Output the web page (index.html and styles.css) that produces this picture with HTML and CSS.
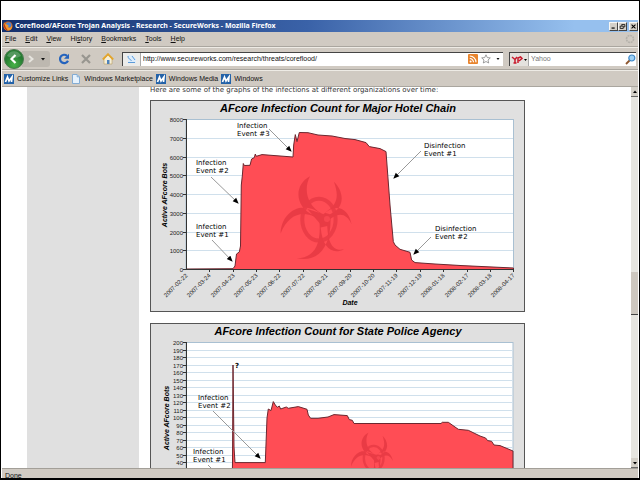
FILE: index.html
```html
<!DOCTYPE html>
<html lang="en">
<head>
<meta charset="utf-8">
<title>Coreflood/AFcore Trojan Analysis - Research - SecureWorks</title>
<link rel="stylesheet" href="styles.css">
</head>
<body>
<div class="window">
  <header class="titlebar">
    <svg class="fox" viewBox="0 0 10 10" aria-hidden="true"><circle cx="5" cy="5" r="4.6" fill="#d9661c"/><circle cx="5.6" cy="4" r="2.8" fill="#4b83cf"/><path d="M1 1 2 3 4 3.4 6 5 4.5 6 7 7 9 4.5C9.500 8 7 9.800 4.500 9.500 1 9 0 5 1 1Z" fill="#f2992c"/><path d="M1 2C0 6 2 9 5 9.500L3 7Z" fill="#b73517"/></svg>
    <h1>Coreflood/AFcore Trojan Analysis - Research - SecureWorks - Mozilla Firefox</h1>
    <div class="controls">
      <button aria-label="Minimize"><svg viewBox="0 0 9 8"><path d="M2 6h4" stroke="#000" stroke-width="1.500"/></svg></button>
      <button aria-label="Restore"><svg viewBox="0 0 9 8"><path d="M3.500 3V1.500h4v3H6M1.500 3.500h4v3h-4z" fill="none" stroke="#000"/></svg></button>
      <button class="close" aria-label="Close"><svg viewBox="0 0 9 8"><path d="M2 1.500 7 6.500M7 1.500 2 6.500" stroke="#000" stroke-width="1.300"/></svg></button>
    </div>
  </header>

  <nav class="menubar">
    <button><u>F</u>ile</button><button><u>E</u>dit</button><button><u>V</u>iew</button><button>Hi<u>s</u>tory</button><button><u>B</u>ookmarks</button><button><u>T</u>ools</button><button><u>H</u>elp</button>
    <svg class="throbber" viewBox="0 0 10 10" aria-hidden="true"><circle cx="5" cy="5" r="3.500" fill="none" stroke="#b5b2ab" stroke-width="1.600" stroke-dasharray="2 .7"/></svg>
  </nav>

  <div class="toolbar">
    <div class="history">
      <button class="back" aria-label="Back"><svg viewBox="0 0 20 20"><defs><radialGradient id="green" cy=".8"><stop offset="0" stop-color="#48b348"/><stop offset="1" stop-color="#267c32"/></radialGradient></defs><circle cx="10" cy="10" r="9.500" fill="url(#green)" stroke="#4b7a50"/><path d="M3 7a7.500 7.500 0 0 1 14 0q-7 4-14 0" fill="#fff" opacity=".22"/><path d="M11.500 6 7.500 10l4 4" fill="none" stroke="#fff" stroke-width="2.200"/></svg></button>
      <button class="forward" aria-label="Forward"><svg viewBox="0 0 26 16"><path d="m7 5 3.500 3L7 11" fill="none" stroke="#e7e5df" stroke-width="2"/><path d="M19 7h4l-2 2.500z" fill="#111"/></svg></button>
    </div>
    <button class="tool" aria-label="Reload"><svg viewBox="0 0 12 12"><path d="M9 2.800A4.200 4.200 0 1 0 10 7.800" fill="none" stroke="#2463bd" stroke-width="2.200"/><path d="M11 .7v5H6z" fill="#2463bd"/></svg></button>
    <button class="tool" aria-label="Stop"><svg viewBox="0 0 12 12"><path d="m2 2 8 8M10 2 2 10" stroke="#989690" stroke-width="2.200"/></svg></button>
    <button class="tool" aria-label="Home"><svg viewBox="0 0 12 12"><path d="M2 6v5h8V6L6 2z" fill="#f5efd8" stroke="#b99b5c" stroke-width=".6"/><path d="M.8 6.500 6 1.200l5.200 5.300" fill="none" stroke="#e3a52b" stroke-width="1.800"/><path d="M5 7h2.500v4H5z" fill="#4e82bb"/></svg></button>
    <div class="address">
      <svg class="site" viewBox="0 0 18 13" aria-hidden="true"><path fill="#ececea" d="M0 0h17v13H0z"/><path d="M17.500 0v13" stroke="#aaa"/><path d="M5 2h4l4 4v4H5z" fill="#dcecfb"/><path d="M5 3c0 4 4 3 3 5M5 9.500h7M9 3l3 4" fill="none" stroke="#5d9bd8"/></svg>
      <input aria-label="Address" value="http://www.secureworks.com/research/threats/coreflood/">
      <svg class="feed" viewBox="0 0 10 10" aria-hidden="true"><rect width="10" height="10" rx="1" fill="#e8842d"/><circle cx="2.600" cy="7.500" r="1" fill="#fff"/><path d="M1.800 4.500a3.700 3.700 0 0 1 3.700 3.700M1.800 2a6.200 6.200 0 0 1 6.200 6.200" fill="none" stroke="#fff" stroke-width="1.200"/></svg>
      <svg class="star" viewBox="0 0 10 10" aria-hidden="true"><path d="m5 .8 1.300 2.800 3 .3L7 6l.7 3L5 7.500 2.300 9 3 6 .7 3.900l3-.3z" fill="#fff" stroke="#858585" stroke-width=".8"/></svg>
      <svg class="drop" viewBox="0 0 6 4" aria-hidden="true"><path d="M1.500 1h3L3 3z" fill="#111"/></svg>
    </div>
    <div class="search">
      <svg class="engine" viewBox="0 0 19 13" aria-hidden="true"><path fill="#e4e2de" d="M0 0h19v13H0z"/><path d="M18.500 0v13" stroke="#aaa"/><path d="m2 4 3 2.500 2-2.500M5 6.500V10M3.500 10h3M8 10V5l2.500-1 1.500 1.500L9 8" fill="none" stroke="#c9182b" stroke-width="1.500"/><path d="M14 6h3l-1.500 2z"/></svg>
      <input aria-label="Search" placeholder="Yahoo">
      <svg class="glass" viewBox="0 0 11 11" aria-hidden="true"><path d="M5 6 1 10" stroke="#8d552d" stroke-width="1.800"/><circle cx="6.800" cy="4" r="3" fill="#9fd1f5" stroke="#4189c8" stroke-width="1.200"/></svg>
    </div>
  </div>

  <nav class="bookmarks">
    <a href="#"><svg viewBox="0 0 10 10"><path fill="#2362a8" d="M0 0h10v10H0z"/><path d="m1.500 8 2-5 1.500 4 3-4-.5 5" fill="none" stroke="#fff" stroke-width="1.700"/></svg>Customize Links</a>
    <a href="#"><svg viewBox="0 0 10 10"><path d="M1.500.5h4.500l2.500 2.500v6.500h-7z" fill="#e6f2fd" stroke="#83acd4"/><path d="M6 .5V3h2.500" fill="#9dc2e4" stroke="#83acd4" stroke-width=".6"/></svg>Windows Marketplace</a>
    <a href="#"><svg viewBox="0 0 10 10"><path fill="#2362a8" d="M0 0h10v10H0z"/><path d="m1.500 8 2-5 1.500 4 3-4-.5 5" fill="none" stroke="#fff" stroke-width="1.700"/></svg>Windows Media</a>
    <a href="#"><svg viewBox="0 0 10 10"><path fill="#2362a8" d="M0 0h10v10H0z"/><path d="m1.500 8 2-5 1.500 4 3-4-.5 5" fill="none" stroke="#fff" stroke-width="1.700"/></svg>Windows</a>
  </nav>

  <div class="viewport">
    <aside class="rail"></aside>
    <main>
      <p>Here are some of the graphs of the infections at different organizations over time:</p>

      <svg class="chart" viewBox="150 100 375 212" role="img" aria-label="AFcore Infection Count for Major Hotel Chain">
        <defs>
          <marker id="arrow" viewBox="0 0 6 6" refX="5" refY="3" markerWidth="6" markerHeight="6" markerUnits="userSpaceOnUse" orient="auto"><path d="M0 .5 6 3 0 5.500z"/></marker>
          <g id="biohazard">
            <ellipse cx="147" cy="146" rx="50" ry="63" fill="none" stroke="#e0343f" stroke-width="12"/>
            <path fill="#dc303b" d="M120 16C70 42 75 110 130 132L155 128C115 105 98 60 120 16ZM32 188C32 130 90 80 155 130L165 160C120 115 60 115 32 188ZM192 32C222 60 228 110 180 130L165 125C208 100 205 70 192 32ZM245 160C235 112 200 95 160 130L168 158C200 120 230 125 245 160ZM80 262C130 262 156 225 148 145L182 145C182 235 140 275 80 262ZM222 235C195 242 174 225 172 165L152 170C158 235 190 252 222 235Z"/>
            <path fill="#dc303b" d="M112 114 150 126 168 132 172 160 152 160Z"/>
            <circle cx="171" cy="144" r="9" fill="#f2434d"/>
          </g>
        </defs>
        <rect class="panel" x="150.500" y="100.500" width="374" height="211"/>
        <rect class="plot" x="186" y="119.500" width="327.500" height="150"/>
        <path class="grid" d="M186 138.500h327M186 157.500h327M186 175.500h327M186 194.500h327M186 213.500h327M186 232.500h327M186 250.500h327"/>
        <path class="area" d="M186 269L233 268.700 235 266 236.500 254 239.300 252 240.500 246 241.300 185 242.300 176 243.300 163.500 244.300 165.500 250 165.300 251.600 159 254.300 157.600 255.300 154 256.300 156.300 262 154.600 293 157 293.700 145 295.300 134.600 297 141.600 299.300 132.500 308 132.700 318 135 332 136 345 138.500 355 139.600 366 142.600 369.300 146.600 380 148.600 386 151.600 390 205 393.300 241.600 395 245 400 249.300 410 252.300 411.600 260 415 262.600 435 264 462 265.600 513.500 268V269.500H186Z"/>
        <use href="#biohazard" transform="translate(270 171) scale(.333)" opacity=".6"/>
        <path class="axis" d="M186.500 119V270M186 269.500H514M183 119.500h3M183 138.500h3M183 157.500h3M183 175.500h3M183 194.500h3M183 213.500h3M183 232.500h3M183 250.500h3M183 269.500h3M209.500 270v2M233.500 270v2M256.500 270v2M279.500 270v2M303.500 270v2M326.500 270v2M350.500 270v2M373.500 270v2M396.500 270v2M420.500 270v2M443.500 270v2M467.500 270v2M490.500 270v2M513.500 270v2"/>
        <text class="heading" x="338" y="112">AFcore Infection Count for Major Hotel Chain</text>
        <g class="scale">
          <text x="183" y="122">8000</text><text x="183" y="141">7000</text><text x="183" y="160">6000</text><text x="183" y="178">5000</text><text x="183" y="197">4000</text><text x="183" y="216">3000</text><text x="183" y="235">2000</text><text x="183" y="253">1000</text><text x="183" y="272">0</text>
        </g>
        <g class="dates">
          <text transform="translate(188 276) rotate(-45)">2007-02-22</text><text transform="translate(211 276) rotate(-45)">2007-03-24</text><text transform="translate(235 276) rotate(-45)">2007-04-23</text><text transform="translate(258 276) rotate(-45)">2007-05-23</text><text transform="translate(281 276) rotate(-45)">2007-06-22</text><text transform="translate(305 276) rotate(-45)">2007-07-22</text><text transform="translate(328 276) rotate(-45)">2007-08-21</text><text transform="translate(352 276) rotate(-45)">2007-09-20</text><text transform="translate(375 276) rotate(-45)">2007-10-20</text><text transform="translate(398 276) rotate(-45)">2007-11-19</text><text transform="translate(422 276) rotate(-45)">2007-12-19</text><text transform="translate(445 276) rotate(-45)">2008-01-18</text><text transform="translate(469 276) rotate(-45)">2008-02-17</text><text transform="translate(492 276) rotate(-45)">2008-03-18</text><text transform="translate(515 276) rotate(-45)">2008-04-17</text>
        </g>
        <text class="axis-name" transform="translate(167 195) rotate(-90)">Active AFcore Bots</text>
        <text class="axis-name" x="350" y="305">Date</text>
        <g class="note">
          <text x="237" y="128">Infection</text><text x="237" y="136">Event #3</text>
          <text x="196" y="165">Infection</text><text x="196" y="173">Event #2</text>
          <text x="196" y="229">Infection</text><text x="196" y="237">Event #1</text>
          <text x="424" y="148">Disinfection</text><text x="424" y="156">Event #1</text>
          <text x="435" y="231">Disinfection</text><text x="435" y="239">Event #2</text>
        </g>
        <path class="pointer" d="M269 129 291 151"/><path class="pointer" d="M211 177 238 203"/><path class="pointer" d="M212 240 232 261"/><path class="pointer" d="M421 151 394 178"/><path class="pointer" d="M431 237 414 254"/>
      </svg>

      <svg class="chart" viewBox="150 323 375 212" role="img" aria-label="AFcore Infection Count for State Police Agency">
        <rect class="panel" x="150.500" y="323.500" width="374" height="211"/>
        <rect class="plot" x="186" y="342.500" width="327" height="150"/>
        <path class="grid" d="M186 350.500h327M186 357.500h327M186 365.500h327M186 372.500h327M186 380.500h327M186 387.500h327M186 395.500h327M186 402.500h327M186 410.500h327M186 417.500h327M186 425.500h327M186 432.500h327M186 440.500h327M186 447.500h327M186 455.500h327M186 462.500h327"/>
        <path class="area" d="M186 492H232L232.500 462 233 365 234 447 235 462.600H265.300L267 418 268.300 409 271 410.600 273.300 401.600 275.300 405 277.300 407.300 279.300 406 280.600 409 286.300 407 288.300 408.300 298.300 406.600 307 409.300 308.300 415 310.600 418.300H318L328 417 334 414.600 347.300 415.600 349.300 419.600 352.300 420.300 354 423.500H441L442.300 422.300H448.300L458.300 429.300 468.300 430.300 480 436 485.600 438 487.600 440.600 491.600 441.300 494 445 500 445.600 513 451V492Z"/>
        <use href="#biohazard" transform="translate(344.700 429.500) scale(.197)" opacity=".6"/>
        <path class="axis" d="M186.500 342V492M183 342.500h3M183 350.500h3M183 357.500h3M183 365.500h3M183 372.500h3M183 380.500h3M183 387.500h3M183 395.500h3M183 402.500h3M183 410.500h3M183 417.500h3M183 425.500h3M183 432.500h3M183 440.500h3M183 447.500h3M183 455.500h3M183 462.500h3"/>
        <text class="heading" x="338" y="335">AFcore Infection Count for State Police Agency</text>
        <g class="scale">
          <text x="183" y="345">200</text><text x="183" y="353">190</text><text x="183" y="360">180</text><text x="183" y="368">170</text><text x="183" y="375">160</text><text x="183" y="383">150</text><text x="183" y="390">140</text><text x="183" y="398">130</text><text x="183" y="405">120</text><text x="183" y="413">110</text><text x="183" y="420">100</text><text x="183" y="428">90</text><text x="183" y="435">80</text><text x="183" y="443">70</text><text x="183" y="450">60</text><text x="183" y="458">50</text><text x="183" y="465">40</text>
        </g>
        <text class="axis-name" transform="translate(169 418) rotate(-90)">Active AFcore Bots</text>
        <g class="note">
          <text class="query" x="235" y="368">?</text>
          <text x="198" y="400">Infection</text><text x="198" y="408">Event #2</text>
          <text x="193" y="454">Infection</text><text x="193" y="462">Event #1</text>
        </g>
        <path class="pointer" d="M213 411 260 458"/><path class="pointer" d="M208 465 226 483"/>
      </svg>
    </main>
    <div class="scrollbar" aria-hidden="true">
      <svg viewBox="0 0 7 10"><path fill="#d4d0c8" d="M0 0h7v10H0z"/><path d="M2 6h4L4 3.500z"/><path d="M0 9.500h7" stroke="#666"/></svg>
      <div class="track"><div class="thumb"></div></div>
      <svg viewBox="0 0 7 10"><path fill="#d4d0c8" d="M0 0h7v10H0z"/><path d="M2 4h4L4 6.500z"/><path d="M0 9.500h7" stroke="#666"/></svg>
    </div>
  </div>
  <footer>Done</footer>
</div>
</body>
</html>
```
FILE: styles.css
```css
* { box-sizing: border-box; }
body {
  margin: 0;
  height: 100vh;
  background: #fff;
  border: 1px solid #000;
  border-bottom-width: 2px;
  padding: 19px 1px 0;
  font: 7px/10px "Liberation Sans", sans-serif;
  color: #111;
}
.window { height: 100%; display: flex; flex-direction: column; background: #d0cac2; overflow: hidden; }
button { border: 0; padding: 0; background: none; font: inherit; color: inherit; }
svg { display: block; flex: none; }
u { text-underline-offset: 1px; text-decoration-thickness: 1px; }

.titlebar { display: flex; align-items: center; height: 12px; flex: none; background: linear-gradient(90deg, #14306c, #3a62a8 48%, #96c0ee 90%); color: #fff; }
.fox { width: 10px; height: 10px; margin: 0 2px 0 1px; }
h1 { flex: 1; margin: 0; font: bold 7px/10px "Noto Sans", sans-serif; white-space: nowrap; }
.controls { display: flex; }
.controls button { width: 9px; height: 9px; background: #d4d0c8; border: 1px solid #f7f7f4; border-right-color: #444; border-bottom-color: #444; }
.controls button.close { margin-left: 2px; }
.controls svg { width: 100%; height: 100%; }

.menubar { display: flex; align-items: center; gap: 9px; height: 15px; flex: none; padding: 0 3px; border-bottom: 1px solid #aaa69f; }
.throbber { width: 10px; height: 10px; margin-left: auto; }

.toolbar { display: flex; align-items: center; height: 23px; flex: none; border-top: 1px solid #eeebe5; border-bottom: 1px solid #aaa69f; padding: 0 2px; }
.history { display: flex; align-items: center; }
.back { width: 20px; height: 20px; z-index: 1; }
.back svg { width: 20px; height: 20px; }
.forward { width: 28px; height: 16px; margin-left: -2px; background: #bdb8b0; border-radius: 0 3px 3px 0; }
.forward svg { width: 26px; height: 16px; }
.tool { margin-left: 10px; }
.tool:first-of-type { margin-left: 8px; }
.tool svg { width: 12px; height: 12px; }
.address, .search { display: flex; align-items: center; min-width: 0; height: 14px; background: #fff; border-top: 1px solid #444; border-left: 1px solid #444; }
.address { flex: 3; margin-left: 8px; padding-right: 2px; }
.search { flex: 1; margin-left: 6px; }
input { flex: 1; min-width: 0; border: 0; padding: 0 2px; outline: 0; background: none; font: inherit; color: #111; }
input::placeholder { color: #777; opacity: 1; }
.site { width: 18px; height: 13px; }
.feed { width: 10px; height: 10px; }
.star { width: 10px; height: 10px; margin: 0 4px 0 3px; }
.drop { width: 6px; height: 4px; }
.engine { width: 19px; height: 13px; }
.glass { width: 11px; height: 11px; }

.bookmarks { display: flex; align-items: center; gap: 3px; height: 17px; flex: none; padding: 0 2px; border-top: 1px solid #eeebe5; border-bottom: 1px solid #aaa69f; }
.bookmarks a { display: flex; align-items: center; gap: 3px; color: inherit; text-decoration: none; }
.bookmarks svg { width: 10px; height: 10px; }

.viewport { flex: 1; min-height: 0; display: grid; grid-template-columns: 112px 1fr 7px; grid-template-rows: 100%; column-gap: 11px; padding-left: 25px; background: #fff; }
.rail { background: #e0e0e0; }
main { overflow: hidden; }
main p { margin: 0 0 7px; font-family: "DejaVu Sans", sans-serif; font-size: 7px; line-height: 6px; color: #333; }
.chart { width: 100%; max-width: 375px; margin-bottom: 11px; }
.panel { fill: #e0e0e0; stroke: #555; }
.plot { fill: #fff; stroke: #a9c0d2; }
.grid { stroke: #d0e0ec; }
.area { fill: #ff4d55; stroke: #6b2830; stroke-width: 1; stroke-linejoin: round; }
.axis { fill: none; stroke: #333; }
.heading { font: italic bold 11px "Liberation Sans", sans-serif; text-anchor: middle; }
.scale, .dates { font: 6px "Liberation Sans", sans-serif; text-anchor: end; fill: #222; }
.axis-name { font: italic bold 7px "Liberation Sans", sans-serif; text-anchor: middle; }
.note { font: 7px "DejaVu Sans", sans-serif; }
.query { font-weight: bold; }
.pointer { stroke: #999; marker-end: url(#arrow); }

.scrollbar { display: flex; flex-direction: column; background: #e6e5e0; }
.scrollbar svg { width: 7px; height: 10px; }
.track { flex: 1; display: grid; grid-template-rows: 49fr 12fr 40fr; }
.thumb { grid-row: 2; background: #cdc7bf; border-bottom: 1px solid #444; }
footer { height: 10px; flex: none; border-top: 1px solid #a39f98; padding-left: 3px; overflow: hidden; line-height: 14px; }
```
